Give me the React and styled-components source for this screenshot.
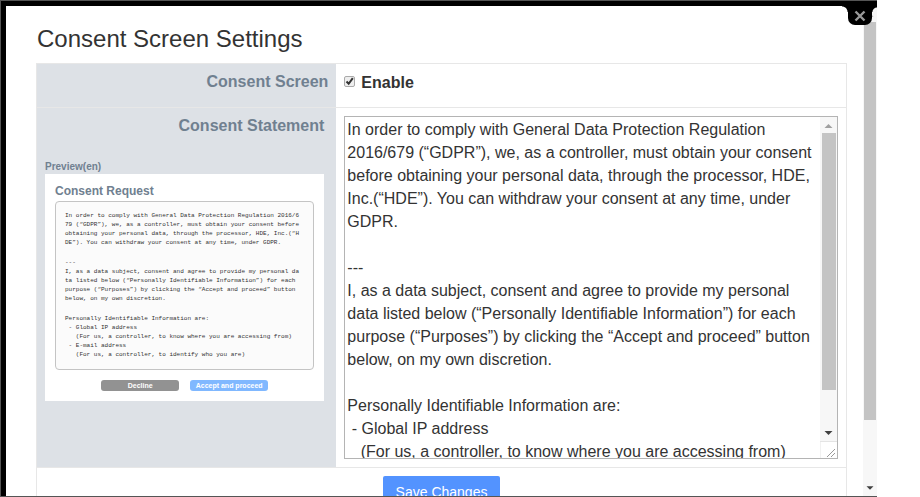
import { useId } from "react";
import { createGlobalStyle, styled } from "styled-components";

const GlobalStyle = createGlobalStyle`
  * {
    box-sizing: border-box;
  }

  body {
    margin: 0;
    background: #fff;
    color: #333;
    font-family: "Liberation Sans", Arial, sans-serif;
    font-size: 16px;
  }
`;

const Window = styled.div`
  position: relative;
  display: flex;
  height: 100vh;
  margin-right: 43px;
  padding: 5px 0 0 5px;
  background: #000;
  border: solid #555;
  border-width: 1px 0 1px 1px;
`;

const Pane = styled.main`
  flex: 1;
  min-width: 0;
  padding: 0 16px 0 30px;
  background: #fff;
  overflow-y: auto;
  scrollbar-width: none;
`;

const Bar = styled.div`
  display: flex;
  flex-direction: column;
  flex: 0 0 ${(props) => props.$width};
  background: #f7f7f7;
`;

const BarArrow = styled.svg`
  display: block;
  flex: 0 0 16px;
  width: 100%;
`;

const BarTrack = styled.div`
  flex: 1;
  padding: 0 1px 0 ${(props) => (props.$flush ? "1px" : "2px")};
`;

const BarThumb = styled.div`
  height: ${(props) => props.$size};
  background: #c4c4c4;
`;

const BarCorner = styled.svg`
  display: block;
  flex: 0 0 17px;
  width: 100%;
  background: #fff;
`;

const CloseButton = styled.button`
  position: absolute;
  top: 0;
  right: 5px;
  width: 24px;
  height: 24px;
  padding: 6px 0 0;
  border: 0;
  border-radius: 0 0 7px 7px;
  background: #000;
  line-height: 0;

  &::before,
  &::after {
    content: "";
    position: absolute;
    top: 5px;
    width: 6px;
    height: 6px;
  }
  &::before {
    right: 100%;
    background: radial-gradient(circle at 0 100%, transparent 5px, #000 6px);
  }
  &::after {
    left: 100%;
    width: 5px;
    background: radial-gradient(circle at 100% 100%, transparent 4px, #000 5px);
  }
`;

const Title = styled.h1`
  margin: 0;
  padding: 19px 0 10px 1px;
  font-size: 24px;
  font-weight: 400;
  line-height: 28px;
`;

const Form = styled.form`
  border: 1px solid #e7e7e7;
`;

const Row = styled.div`
  display: flex;
  border-bottom: 1px solid #e7e7e7;
`;

const HeadCell = styled.div`
  flex: 0 0 37%;
  padding: 8px;
  background: #dde1e6;
  color: #708090;
`;

const Heading = styled.div`
  font-weight: 700;
  line-height: 20px;
  text-align: right;
`;

const LabelHeading = styled.label`
  display: block;
  padding-right: 4px;
  font-weight: 700;
  line-height: 20px;
  text-align: right;
`;

const Cell = styled.div`
  flex: 1;
  min-width: 0;
  padding: 8px;
`;

const EnableLabel = styled.label`
  display: flex;
  align-items: center;
  gap: 6px;
  height: 22px;
  margin-bottom: 5px;
  font-weight: 700;
`;

const Tick = styled.input`
  appearance: none;
  width: 11px;
  height: 11px;
  margin: 0 0 4px;
  border: 1px solid #aaa;
  border-radius: 2px;
  background: #eee center / 9px 9px no-repeat;

  &:checked {
    background-image: url("data:image/svg+xml,%3Csvg xmlns='http://www.w3.org/2000/svg' viewBox='0 0 9 9'%3E%3Cpath d='M1.5 4.5l2.2 2.3L7.8 1.2' fill='none' stroke='%23333' stroke-width='2'/%3E%3C/svg%3E");
  }
`;

const StatementBox = styled.div`
  display: flex;
  border: 1px solid #b4b4b4;
`;

const Statement = styled.textarea`
  display: block;
  flex: 1;
  min-width: 0;
  height: 341px;
  padding: 1px 2px;
  border: 0;
  outline: 0;
  background: #fff;
  color: #333;
  font: inherit;
  line-height: 23px;
  resize: none;
  scrollbar-width: none;
`;

const PreviewLabel = styled.div`
  margin-top: 24px;
  font-size: 10px;
  font-weight: 700;
  line-height: 14px;
`;

const Preview = styled.section`
  margin-right: 4px;
  padding: 10px;
  background: #fff;
`;

const PreviewTitle = styled.h2`
  margin: 0 0 2px;
  font-size: 12px;
  line-height: 15px;
`;

const PreviewBox = styled.div`
  display: flex;
  flex-direction: column;
  gap: 11px;
  padding: 9px 9px 10px;
  border: 1px solid #c4c4c4;
  border-radius: 4px;
  background: #fbfbfb;
`;

const PreviewText = styled.p`
  margin: 0;
  color: #333;
  font-family: "Liberation Mono", monospace;
  font-size: 6px;
  line-height: 9px;
  white-space: pre;
`;

const PreviewActions = styled.div`
  display: flex;
  justify-content: center;
  gap: 11px;
  margin-top: 10px;
`;

const PreviewButton = styled.button`
  width: 78px;
  height: 11px;
  padding: 0;
  border: 0;
  border-radius: 3px;
  background: ${(props) => (props.$accept ? "#80b8ff" : "#929292")};
  color: #fff;
  font: 700 7px/11px "Liberation Sans", Arial, sans-serif;
  white-space: nowrap;
`;

const Footer = styled.div`
  display: flex;
  justify-content: center;
  padding: 8px 8px 40px;
`;

const SaveButton = styled.button`
  width: 117px;
  height: 32px;
  padding: 0;
  border: 0;
  border-radius: 2px;
  background: #5393ff;
  color: #fff;
  font: 14px/32px "Liberation Sans", Arial, sans-serif;
`;

const statement = `In order to comply with General Data Protection Regulation 2016/679 (“GDPR”), we, as a controller, must obtain your consent before obtaining your personal data, through the processor, HDE, Inc.(“HDE”). You can withdraw your consent at any time, under GDPR.

---
I, as a data subject, consent and agree to provide my personal data listed below (“Personally Identifiable Information”) for each purpose (“Purposes”) by clicking the “Accept and proceed” button below, on my own discretion.

Personally Identifiable Information are:
 - Global IP address
   (For us, a controller, to know where you are accessing from)
 - E-mail address
   (For us, a controller, to identify who you are)`;

const previewParagraphs = [
  `In order to comply with General Data Protection Regulation 2016/6
79 (“GDPR”), we, as a controller, must obtain your consent before
obtaining your personal data, through the processor, HDE, Inc.(“H
DE”). You can withdraw your consent at any time, under GDPR.`,
  `---
I, as a data subject, consent and agree to provide my personal da
ta listed below (“Personally Identifiable Information”) for each
purpose (“Purposes”) by clicking the “Accept and proceed” button
below, on my own discretion.`,
  `Personally Identifiable Information are:
 - Global IP address
   (For us, a controller, to know where you are accessing from)
 - E-mail address
   (For us, a controller, to identify who you are)`,
];

function ScrollBar({ width, thumb, flush, corner }) {
  return (
    <Bar $width={width} aria-hidden="true">
      <BarArrow viewBox="0 0 16 16" height="16">
        <path d="M4 11h8l-4-4z" fill="#a0a0a0" />
      </BarArrow>
      <BarTrack $flush={flush}>
        <BarThumb $size={thumb} />
      </BarTrack>
      <BarArrow viewBox="0 0 16 16" height="16">
        <path d="M4 6h8l-4 4z" fill="#404040" />
      </BarArrow>
      {corner && (
        <BarCorner viewBox="0 0 17 17" height="17">
          <path d="M0 17V.5h17" fill="none" stroke="#e4e4e4" />
          <path d="M7 16l8-8M11 16l4-4" stroke="#999" />
        </BarCorner>
      )}
    </Bar>
  );
}

function ConsentPreview() {
  return (
    <>
      <PreviewLabel>Preview(en)</PreviewLabel>
      <Preview>
        <PreviewTitle>Consent Request</PreviewTitle>
        <PreviewBox>
          {previewParagraphs.map((text) => (
            <PreviewText key={text}>{text}</PreviewText>
          ))}
        </PreviewBox>
        <PreviewActions>
          <PreviewButton type="button">Decline</PreviewButton>
          <PreviewButton type="button" $accept>
            Accept and proceed
          </PreviewButton>
        </PreviewActions>
      </Preview>
    </>
  );
}

function App() {
  const statementId = useId();

  return (
    <>
      <GlobalStyle />
      <Window>
        <Pane>
          <Title>Consent Screen Settings</Title>
          <Form>
            <Row>
              <HeadCell>
                <Heading>Consent Screen</Heading>
              </HeadCell>
              <Cell>
                <EnableLabel>
                  <Tick type="checkbox" defaultChecked />
                  Enable
                </EnableLabel>
              </Cell>
            </Row>
            <Row>
              <HeadCell>
                <LabelHeading htmlFor={statementId}>Consent Statement</LabelHeading>
                <ConsentPreview />
              </HeadCell>
              <Cell>
                <StatementBox>
                  <Statement id={statementId} defaultValue={statement} spellCheck={false} />
                  <ScrollBar width="17px" thumb="88%" corner />
                </StatementBox>
              </Cell>
            </Row>
            <Footer>
              <SaveButton type="button">Save Changes</SaveButton>
            </Footer>
          </Form>
        </Pane>
        <ScrollBar width="14px" thumb="87%" flush />
        <CloseButton type="button" aria-label="Close">
          <svg width="12" height="12" viewBox="0 0 12 12" stroke="#999" strokeWidth="2.4">
            <path d="M1.5 1.5l9 9M10.5 1.5l-9 9" />
          </svg>
        </CloseButton>
      </Window>
    </>
  );
}

export default App;
